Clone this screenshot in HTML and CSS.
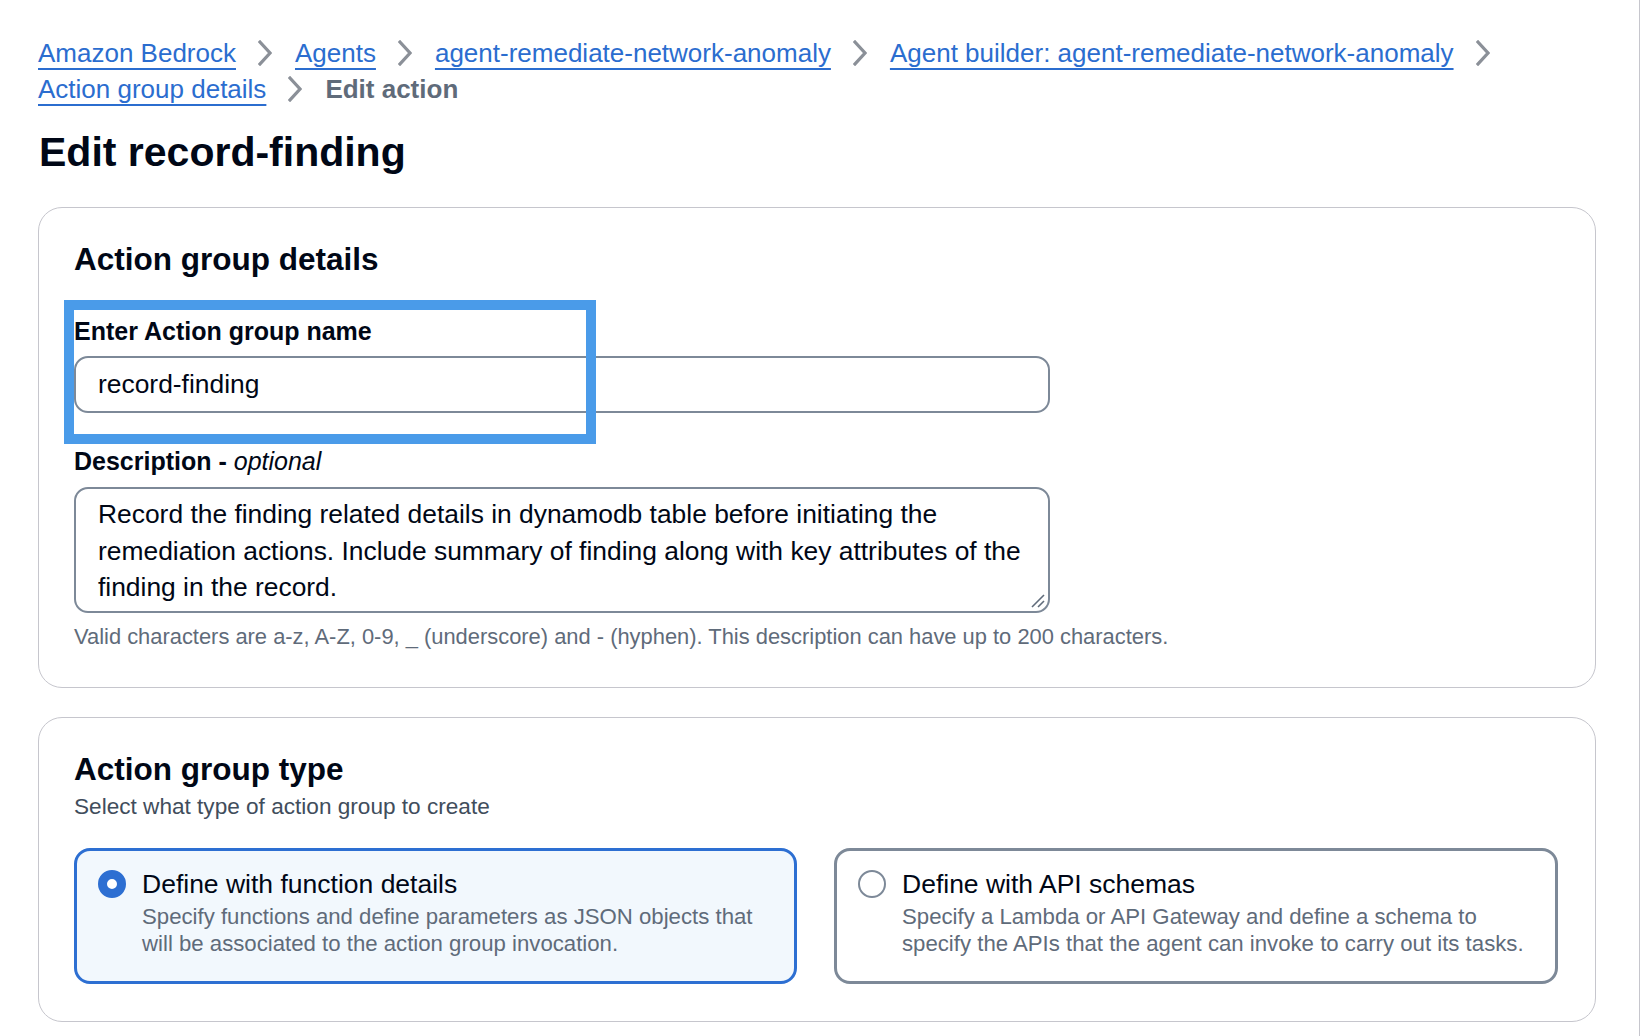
FILE: index.html
```html
<!DOCTYPE html>
<html lang="en">
<head>
<meta charset="utf-8">
<title>Edit record-finding</title>
<link rel="stylesheet" href="styles.css">
</head>
<body>
<div class="page">
  <nav class="crumbs">
    <ol>
      <li><a href="#">Amazon Bedrock</a><svg class="sep" viewBox="0 0 14 26" width="14" height="26"><polyline points="2,2 12,13 2,24"/></svg></li>
      <li><a href="#">Agents</a><svg class="sep" viewBox="0 0 14 26" width="14" height="26"><polyline points="2,2 12,13 2,24"/></svg></li>
      <li><a href="#">agent-remediate-network-anomaly</a><svg class="sep" viewBox="0 0 14 26" width="14" height="26"><polyline points="2,2 12,13 2,24"/></svg></li>
      <li><a href="#">Agent builder: agent-remediate-network-anomaly</a><svg class="sep" viewBox="0 0 14 26" width="14" height="26"><polyline points="2,2 12,13 2,24"/></svg></li>
      <li><a href="#">Action group details</a><svg class="sep" viewBox="0 0 14 26" width="14" height="26"><polyline points="2,2 12,13 2,24"/></svg></li>
      <li><span class="current">Edit action</span></li>
    </ol>
  </nav>

  <h1 class="title">Edit record-finding</h1>

  <section class="card card-details">
    <h2 class="card-title">Action group details</h2>
    <div class="field field-name">
      <div class="label">Enter Action group name</div>
      <div class="input">record-finding</div>
      <div class="highlight"></div>
    </div>
    <div class="field field-desc">
      <div class="label">Description - <i>optional</i></div>
      <div class="textarea">Record the finding related details in dynamodb table before initiating the<br>remediation actions. Include summary of finding along with key attributes of the<br>finding in the record.<svg class="grip" viewBox="0 0 16 16" width="16" height="16"><line x1="2" y1="14" x2="14" y2="2"/><line x1="8" y1="14" x2="14" y2="8"/></svg></div>
      <div class="hint">Valid characters are a-z, A-Z, 0-9, _ (underscore) and - (hyphen). This description can have up to 200 characters.</div>
    </div>
  </section>

  <section class="card card-type">
    <h2 class="card-title">Action group type</h2>
    <div class="subtitle">Select what type of action group to create</div>
    <div class="tiles">
      <div class="tile selected">
        <span class="radio on"></span>
        <div class="tile-text">
          <div class="tile-title">Define with function details</div>
          <div class="tile-desc">Specify functions and define parameters as JSON objects that<br>will be associated to the action group invocation.</div>
        </div>
      </div>
      <div class="tile">
        <span class="radio"></span>
        <div class="tile-text">
          <div class="tile-title">Define with API schemas</div>
          <div class="tile-desc">Specify a Lambda or API Gateway and define a schema to<br>specify the APIs that the agent can invoke to carry out its tasks.</div>
        </div>
      </div>
    </div>
  </section>
</div>
</body>
</html>
```

FILE: styles.css
```css
* { box-sizing: border-box; }

html, body {
  margin: 0;
  padding: 0;
  background: #ffffff;
}

body {
  font-family: "Liberation Sans", Arial, sans-serif;
  color: #000716;
}

.page {
  width: 1640px;
  min-height: 1036px;
  padding: 35px 43px 0 38px;
  border-right: 1px solid #c6c6cd;
}

/* Breadcrumbs */
.crumbs ol {
  list-style: none;
  margin: 0;
  padding: 0;
  display: flex;
  flex-wrap: wrap;
  font-size: 26px;
  line-height: 36px;
}

.crumbs li {
  display: flex;
  align-items: center;
  white-space: nowrap;
}

.crumbs a {
  color: #2b6dcf;
  text-decoration: underline;
  text-decoration-thickness: 2px;
  text-underline-offset: 6px;
}

.crumbs .sep {
  margin: 0 23px 0 22px;
  fill: none;
  stroke: #8b9098;
  stroke-width: 3.2;
  stroke-linecap: square;
}

.crumbs .current {
  font-weight: 700;
  color: #5f6b7a;
}

/* Title */
.title {
  margin: 20px 0 30px 1px;
  font-size: 41px;
  line-height: 50px;
  font-weight: 700;
}

/* Cards */
.card {
  border: 1.5px solid #c6c6cd;
  border-radius: 24px;
  padding: 31px 35px 36px 35px;
  margin-bottom: 29px;
}

.card-title {
  margin: 0;
  font-size: 31.5px;
  line-height: 40px;
  font-weight: 700;
}

/* Fields */
.field {
  position: relative;
}

.field-name {
  margin-top: 34px;
}

.field-desc {
  margin-top: 30px;
}

.label {
  font-size: 25px;
  line-height: 36px;
  font-weight: 700;
}

.label i {
  font-weight: 400;
}

.input {
  margin-top: 7px;
  width: 976px;
  height: 57px;
  border: 2.5px solid #7d8998;
  border-radius: 14px;
  padding: 0 22px;
  font-size: 26.4px;
  line-height: 52px;
}

.highlight {
  position: absolute;
  left: -10px;
  top: -13px;
  width: 532px;
  height: 144px;
  border: 10px solid #4a9be9;
  pointer-events: none;
}

.textarea {
  position: relative;
  margin-top: 8px;
  width: 976px;
  height: 126px;
  border: 2.5px solid #7d8998;
  border-radius: 14px;
  padding: 7px 22px 0;
  font-size: 26.4px;
  line-height: 36.5px;
  white-space: nowrap;
}

.textarea .grip {
  position: absolute;
  right: 2px;
  bottom: 2px;
  stroke: #5f6b7a;
  stroke-width: 1.6;
}

.hint {
  margin-top: 10px;
  font-size: 21.9px;
  line-height: 28px;
  color: #5f6b7a;
}

/* Type card */
.card-type {
  padding-top: 31px;
  padding-bottom: 37px;
}

.subtitle {
  margin-top: 2px;
  font-size: 22.6px;
  line-height: 32px;
  color: #414d5c;
}

.tiles {
  margin-top: 25px;
  display: grid;
  grid-template-columns: 723px 724px;
  column-gap: 37px;
}

.tile {
  display: flex;
  align-items: flex-start;
  gap: 16px;
  height: 136px;
  border: 3px solid #7d8998;
  border-radius: 16px;
  padding: 15px 20px 0 21px;
  background: #ffffff;
}

.tile.selected {
  border-color: #2d6fd2;
  background: #f2f8fd;
}

.radio {
  flex: none;
  width: 28px;
  height: 28px;
  margin-top: 4px;
  border-radius: 50%;
  border: 2.6px solid #7d8998;
  background: #ffffff;
}

.radio.on {
  border: 9px solid #2d6fd2;
}

.tile-title {
  font-size: 26.5px;
  line-height: 36px;
}

.tile-desc {
  margin-top: 1px;
  font-size: 22.2px;
  line-height: 27px;
  color: #5f6b7a;
  white-space: nowrap;
}
```
